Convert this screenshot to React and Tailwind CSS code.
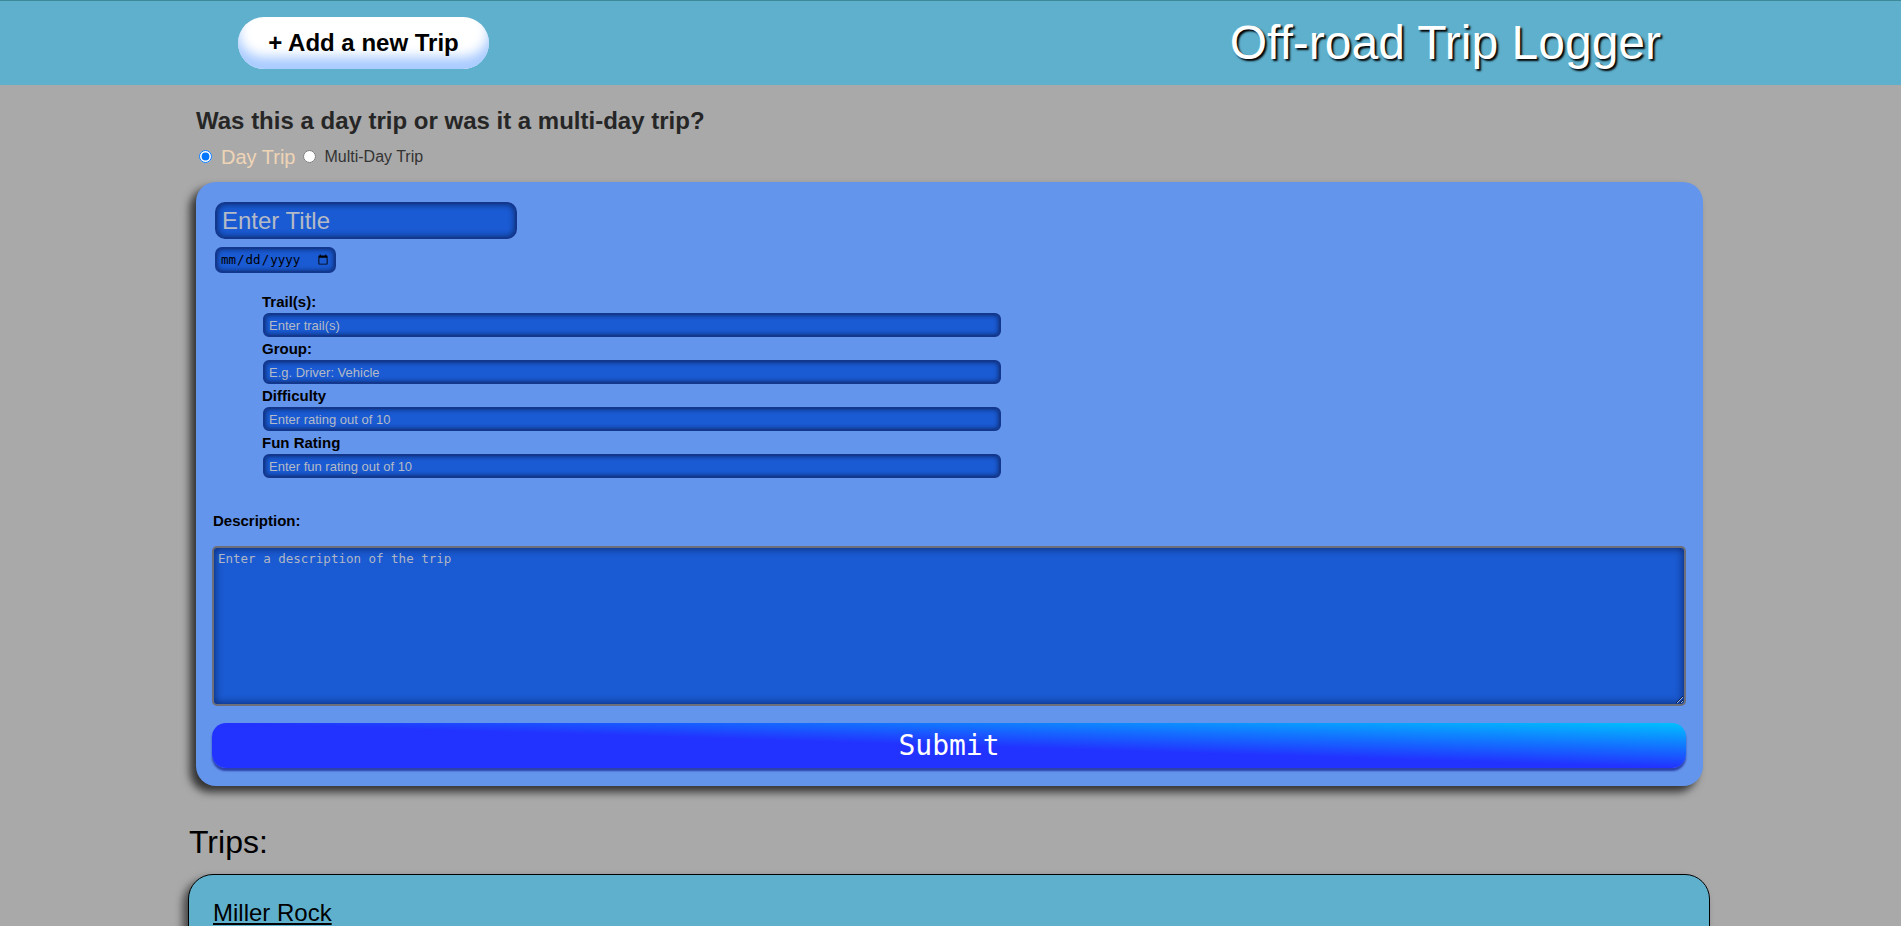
import { useState } from "react";

const sans = "font-['Liberation_Sans',Arial,sans-serif]";
const mono = "font-['DejaVu_Sans_Mono',monospace]";

const fields = [
  { label: "Trail(s):", ph: "Enter trail(s)" },
  { label: "Group:", ph: "E.g. Driver: Vehicle" },
  { label: "Difficulty", ph: "Enter rating out of 10" },
  { label: "Fun Rating", ph: "Enter fun rating out of 10" },
];

function Header() {
  return (
    <header className="h-[85px] border-t border-[#3e8a96] bg-[#5eb0cd] flex items-center justify-between pl-[238px] pr-[240px]">
      <button className="h-[52px] w-[251px] rounded-full bg-white shadow-[inset_0_-12px_12px_#a9cbff] text-[24px] font-bold text-black">
        + Add a new Trip
      </button>
      <h1 className="text-[48px] leading-none text-white [text-shadow:2px_2px_2px_#000]">Off-road Trip Logger</h1>
    </header>
  );
}

function TripForm() {
  const [kind, setKind] = useState("day");
  return (
    <div className="w-[1507px] ml-[196px]">
      <h3 className="mt-[22px] text-[24px] font-bold text-[#262626] leading-[28px]">
        Was this a day trip or was it a multi-day trip?
      </h3>
      <div className="flex items-center mt-[10px] h-[23px]">
        <input type="radio" name="kind" checked={kind === "day"} onChange={() => setKind("day")} className="ml-[3px] w-[13px] h-[13px]" />
        <label className="ml-[9px] text-[20px] text-[#efd5b6]">Day Trip</label>
        <input type="radio" name="kind" checked={kind === "multi"} onChange={() => setKind("multi")} className="ml-[8px] w-[13px] h-[13px]" />
        <label className="ml-[8px] text-[16px] text-[#333]">Multi-Day Trip</label>
      </div>

      <form
        onSubmit={(e) => e.preventDefault()}
        className="mt-[14px] bg-[#6495ed] rounded-[20px] pl-[16px] pr-[17px] pt-[20px] pb-[18px] shadow-[-6px_6px_8px_rgba(0,0,0,0.7)] flex flex-col"
      >
        <input
          placeholder="Enter Title"
          className="ml-[3px] w-[302px] h-[37px] rounded-[10px] bg-[#1a5ad2] border-2 border-[#12378c] shadow-[inset_0_0_6px_#0a2560] px-[5px] text-[24px] text-white placeholder:text-[#b4bac6] outline-none"
        />
        <input
          type="date"
          className={`${mono} ml-[3px] mt-[8px] w-[121px] h-[26px] rounded-[7px] bg-[#1a5ad2] border-2 border-[#12378c] shadow-[inset_0_0_5px_#0a2560] px-[3px] text-[12.5px] text-black outline-none`}
        />

        <div className="ml-[50px] mt-[17px] flex flex-col">
          {fields.map((f) => (
            <div key={f.label} className="flex flex-col">
              <label className="text-[15px] font-bold leading-[23px] text-black">{f.label}</label>
              <input
                placeholder={f.ph}
                className="ml-px w-[738px] h-[24px] rounded-[6px] bg-[#1a5ad2] border-2 border-[#12378c] shadow-[inset_0_0_5px_#0a2560] px-[4px] text-[13px] text-white placeholder:text-[#b4bac6] outline-none"
              />
            </div>
          ))}
        </div>

        <label className="ml-px mt-[34px] text-[15px] font-bold leading-[17px] text-black">Description:</label>
        <textarea
          placeholder="Enter a description of the trip"
          className={`${mono} mt-[17px] h-[160px] w-full rounded-[5px] bg-[#1a5ad2] border-2 border-[#6e6e78] shadow-[inset_0_0_8px_#0a2560] px-[4px] py-[2px] text-[12.5px] text-white placeholder:text-[#b0b6c4] outline-none`}
        />
        <button
          type="submit"
          className={`${mono} mt-[17px] h-[45px] w-full rounded-[14px] bg-[linear-gradient(to_top_right,#2233ff_50%,#00c0ff)] shadow-[0_3px_2px_rgba(20,30,140,0.7)] text-[28px] text-white`}
        >
          Submit
        </button>
      </form>
    </div>
  );
}

function TripList() {
  return (
    <div className="w-[1522px] ml-[188px]">
      <h2 className="mt-[38px] ml-px text-[32px] leading-[37px] text-black">Trips:</h2>
      <div className="mt-[13px] rounded-[25px] border border-black bg-[#5eb0cd] shadow-[-5px_5px_8px_rgba(0,0,0,0.6)] px-[24px] pt-[24px] pb-[30px]">
        <a href="#" className="text-[24px] leading-[28px] text-black underline">Miller Rock</a>
      </div>
    </div>
  );
}

export default function App() {
  return (
    <div className={`${sans} min-h-screen bg-[#a9a9a9] pb-10`}>
      <Header />
      <TripForm />
      <TripList />
    </div>
  );
}
